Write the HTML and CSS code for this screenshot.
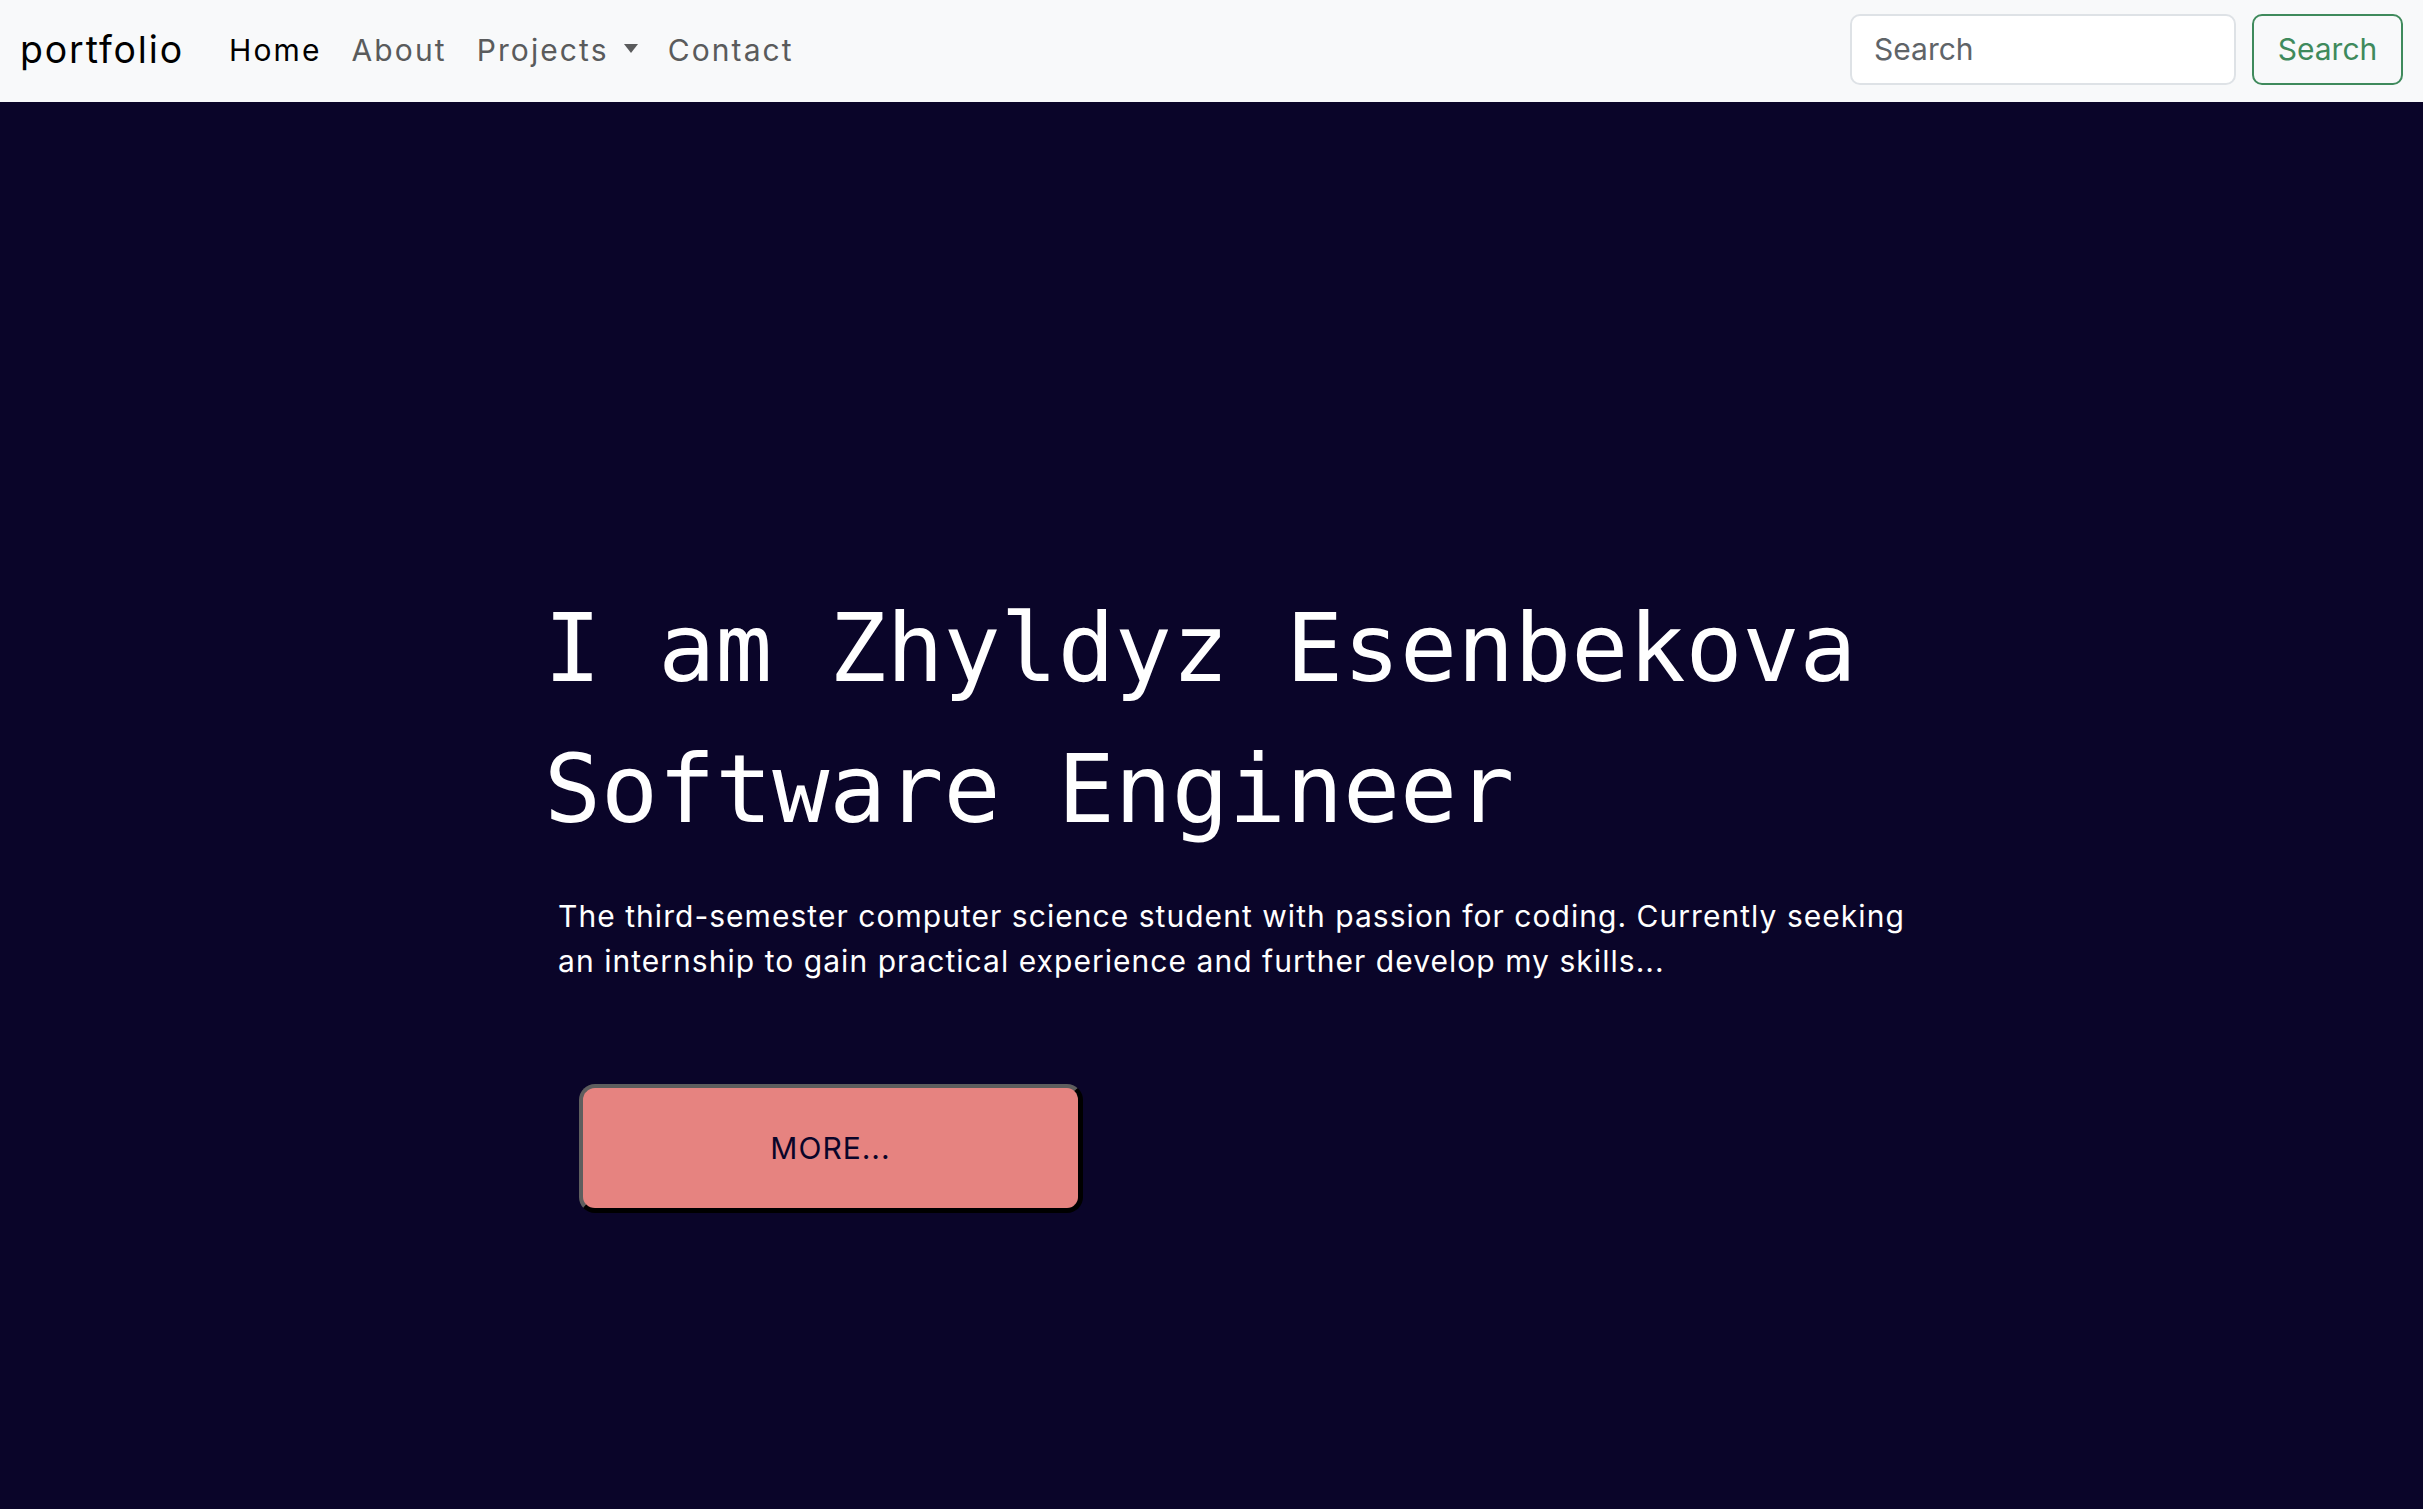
FILE: index.html
```html
<!DOCTYPE html>
<html lang="en">
<head>
<meta charset="utf-8">
<title>portfolio</title>
<link rel="stylesheet" href="styles.css">
</head>
<body>
<nav class="navbar">
  <a class="brand" href="#">portfolio</a>
  <ul class="nav">
    <li><a class="nav-link active" href="#">Home</a></li>
    <li><a class="nav-link" href="#">About</a></li>
    <li><a class="nav-link dropdown" href="#">Projects<span class="caret"></span></a></li>
    <li><a class="nav-link" href="#">Contact</a></li>
  </ul>
  <form class="search">
    <input class="search-input" type="search" placeholder="Search">
    <button class="search-btn" type="button">Search</button>
  </form>
</nav>
<main class="hero">
  <h1 class="title">I am Zhyldyz Esenbekova<br>Software Engineer</h1>
  <p class="lead">The third-semester computer science student with passion for coding. Currently seeking an internship to gain practical experience and further develop my skills...</p>
  <button class="more" type="button">MORE...</button>
</main>
</body>
</html>
```

FILE: styles.css
```css
* { box-sizing: border-box; }

html, body {
  margin: 0;
  padding: 0;
}

body {
  background: #0a0529;
  font-family: "Inter", "Open Sans", sans-serif;
  font-size: 30px;
  line-height: 45px;
  color: #ffffff;
  min-height: 1509px;
}

.navbar {
  display: flex;
  align-items: center;
  height: 102px;
  padding: 13px 20px 17px 20px;
  background: #f8f9fa;
}

.brand {
  font-size: 37.4px;
  line-height: 56px;
  letter-spacing: 1.9px;
  color: #000;
  text-decoration: none;
  margin-right: 30px;
  margin-top: 2px;
}

.nav {
  display: flex;
  list-style: none;
  margin: 0;
  padding: 0;
  flex: 1;
}

.nav-link {
  display: flex;
  align-items: center;
  padding: 0 15px;
  margin-top: 2px;
  color: #5a5b5c;
  text-decoration: none;
  line-height: 45px;
  letter-spacing: 2.1px;
}

.nav-link.active {
  color: #000;
}

.caret {
  display: inline-block;
  width: 0;
  height: 0;
  margin-left: 15px;
  margin-top: -3px;
  border-top: 9px solid #5a5b5c;
  border-left: 7.5px solid transparent;
  border-right: 7.5px solid transparent;
}

.search {
  display: flex;
  gap: 16px;
}

.search-input {
  width: 386px;
  height: 71px;
  padding: 0 22px;
  border: 2px solid #dee2e6;
  border-radius: 10px;
  background: #fff;
  font-family: inherit;
  font-size: 30px;
  color: #212529;
  outline: none;
}

.search-input::placeholder {
  color: #5f6468;
}

.search-btn {
  width: 151px;
  height: 71px;
  padding: 0;
  border: 2px solid #3f8a5c;
  border-radius: 10px;
  background: transparent;
  color: #3f8a5c;
  font-family: inherit;
  font-size: 30px;
}

.hero {
  padding: 476px 0 0 544px;
}

.title {
  margin: 0;
  font-family: "DejaVu Sans Mono", monospace;
  font-weight: normal;
  font-size: 94.8px;
  line-height: 141px;
  color: #fff;
}

.lead {
  margin: 34px 0 0 14px;
  width: 1370px;
  font-size: 30px;
  line-height: 45px;
  letter-spacing: 1.04px;
}

.more {
  display: block;
  margin: 100px 0 0 35px;
  width: 504px;
  height: 129px;
  border-width: 4px 5px 5px 4px;
  border-style: solid;
  border-color: #5e5e5e #000 #000 #5e5e5e;
  border-radius: 16px;
  background: #e68380;
  color: #0a0529;
  font-family: inherit;
  font-size: 30px;
  letter-spacing: 1px;
}
```
